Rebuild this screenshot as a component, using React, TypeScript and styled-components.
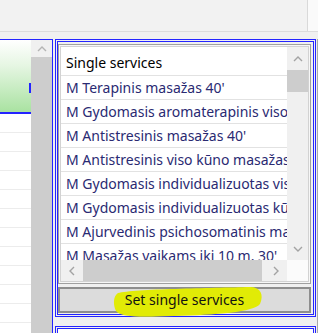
import React from "react"
import styled, { createGlobalStyle } from "styled-components"

const BLUE = "#2424ff"

const GlobalStyle = createGlobalStyle`
  html, body {
    margin: 0;
    padding: 0;
    background: #f0f0f0;
  }
  body {
    font-family: "Noto Sans", "Open Sans", sans-serif;
    font-size: 14px;
  }
`

const Screen = styled.div`
  width: 318px;
  height: 333px;
  overflow: hidden;
  display: flex;
  flex-direction: column;
  background: #f0f0f0;
`

const TopBar = styled.div`
  height: 31px;
  flex: none;
  display: flex;
  justify-content: flex-end;
  background: #f2f2f2;
  border-bottom: 1px solid #dcdcdc;
`

const TopStrip = styled.div`
  width: 10px;
  border-left: 1px solid #d9d9d9;
  background: #fafafa;
`

const Main = styled.div`
  flex: 1;
  display: flex;
  padding-top: 7px;
  min-height: 0;
`

const LeftPanel = styled.div`
  width: 52px;
  flex: none;
  display: flex;
  border-top: 1px solid ${BLUE};
  border-right: 1px solid ${BLUE};
`

const LeftContent = styled.div`
  width: 31px;
  background: #fff;
  display: flex;
  flex-direction: column;
`

const GreenArea = styled.div`
  position: relative;
  height: 72px;
  flex: none;
  background: linear-gradient(#ffffff, #e6f6e3 35%, #a9e2a1);
  border-bottom: 2px solid ${BLUE};
`

const Tick = styled.div`
  position: absolute;
  right: 0;
  top: 43px;
  width: 2px;
  height: 10px;
  background: ${BLUE};
`

const LeftRow = styled.div`
  height: 18px;
  flex: none;
  border-bottom: 1px solid #ececec;
`

const LeftScroll = styled.div`
  width: 21px;
  display: flex;
  flex-direction: column;
  background: #cdcdcd;
`

const ArrowBox = styled.div<{ $h: number; $w?: number; $bg?: string }>`
  height: ${(p) => p.$h}px;
  width: ${(p) => (p.$w ? `${p.$w}px` : "auto")};
  flex: none;
  display: flex;
  align-items: center;
  justify-content: center;
  background: ${(p) => p.$bg || "#f0f0f0"};
`

const RightColumn = styled.div`
  width: 261px;
  flex: none;
  margin-left: 2px;
  display: flex;
  flex-direction: column;
  gap: 9px;
`

const Outer = styled.div<{ $h?: number }>`
  height: ${(p) => (p.$h ? `${p.$h}px` : "auto")};
  flex: none;
  box-sizing: border-box;
  border: 1px solid ${BLUE};
  padding: 1px;
  display: flex;
  background: #f0f0f0;
`

const Inner = styled.div<{ $white?: boolean }>`
  flex: 1;
  border: 1px solid ${BLUE};
  display: flex;
  flex-direction: column;
  padding: 2px 2px 1px 0;
  gap: 3px;
  background: ${(p) => (p.$white ? "#fff" : "#f0f0f0")};
`

const Frame = styled.div`
  height: 240px;
  flex: none;
  box-sizing: border-box;
  border: 1px solid #a0a0a0;
  padding: 1px;
  background: #f7f7f7;
  display: flex;
`

const ListBox = styled.div`
  flex: 1;
  border: 1px solid #d2d2d2;
  background: #fff;
  display: grid;
  grid-template-columns: 1fr 21px;
  grid-template-rows: 1fr 21px;
  min-width: 0;
`

const Items = styled.div`
  overflow: hidden;
  min-width: 0;
`

const Header = styled.div`
  height: 29px;
  box-sizing: border-box;
  padding: 3px 0 0 5px;
  display: flex;
  align-items: center;
  color: #000;
  border-bottom: 1px solid #e2e2e2;
  white-space: nowrap;
`

const Item = styled.div`
  height: 24px;
  box-sizing: border-box;
  padding-left: 5px;
  display: flex;
  align-items: center;
  color: #2a2a72;
  border-bottom: 1px solid #e2e2e2;
  white-space: nowrap;
`

const VScroll = styled.div`
  display: flex;
  flex-direction: column;
  background: #f0f0f0;
`

const Thumb = styled.div<{ $size: number }>`
  flex: none;
  height: ${(p) => p.$size}px;
  background: #cdcdcd;
`

const HThumb = styled.div<{ $size: number }>`
  flex: none;
  width: ${(p) => p.$size}px;
  background: #cdcdcd;
`

const Track = styled.div`
  flex: 1;
`

const HScroll = styled.div`
  display: flex;
  background: #f0f0f0;
`

const Corner = styled.div`
  background: #fbfbfb;
`

const Button = styled.div`
  position: relative;
  height: 26px;
  flex: none;
  box-sizing: border-box;
  border: 2px solid #8e8e8e;
  background: #dcdcdc;
  display: flex;
  align-items: center;
  justify-content: center;
  color: #111;
`

const Marker = styled.svg`
  position: absolute;
  left: 52px;
  top: -4px;
`

const Label = styled.span`
  position: relative;
  padding-bottom: 1px;
`

const RightEdge = styled.div`
  width: 1px;
  margin-left: 1px;
  flex: none;
  background: #a8a8a8;
`

const Chevron = ({ dir, color = "#a3a3a3" }: { dir: "up" | "down" | "left" | "right"; color?: string }) => {
  const pts = {
    up: "1,6 5,2 9,6",
    down: "1,2 5,6 9,2",
    left: "6,1 2,5 6,9",
    right: "2,1 6,5 2,9",
  }[dir]
  const vertical = dir === "up" || dir === "down"
  return (
    <svg width={vertical ? 10 : 8} height={vertical ? 8 : 10}>
      <polyline points={pts} fill="none" stroke={color} strokeWidth="1.4" />
    </svg>
  )
}

const services = [
  "M Terapinis masažas 40'",
  "M Gydomasis aromaterapinis viso kūno masažas",
  "M Antistresinis masažas 40'",
  "M Antistresinis viso kūno masažas 60'",
  "M Gydomasis individualizuotas viso kūno masažas",
  "M Gydomasis individualizuotas kūno dalies masažas",
  "M Ajurvedinis psichosomatinis masažas",
  "M Masažas vaikams iki 10 m. 30'",
]

export default function App() {
  return (
    <Screen>
      <GlobalStyle />
      <TopBar>
        <TopStrip />
      </TopBar>
      <Main>
        <LeftPanel>
          <LeftContent>
            <GreenArea>
              <Tick />
            </GreenArea>
            {Array.from({ length: 12 }).map((_, i) => (
              <LeftRow key={i} />
            ))}
          </LeftContent>
          <LeftScroll>
            <ArrowBox $h={17}>
              <Chevron dir="up" color="#b4b4b4" />
            </ArrowBox>
          </LeftScroll>
        </LeftPanel>
        <RightColumn>
          <Outer $h={278}>
            <Inner>
              <Frame>
                <ListBox>
                  <Items>
                    <Header>Single services</Header>
                    {services.map((s) => (
                      <Item key={s}>{s}</Item>
                    ))}
                  </Items>
                  <VScroll>
                    <ArrowBox $h={23}>
                      <Chevron dir="up" />
                    </ArrowBox>
                    <Thumb $size={22} />
                    <Track />
                    <ArrowBox $h={22}>
                      <Chevron dir="down" />
                    </ArrowBox>
                  </VScroll>
                  <HScroll>
                    <ArrowBox $h={21} $w={22}>
                      <Chevron dir="left" />
                    </ArrowBox>
                    <HThumb $size={179} />
                    <Track />
                    <ArrowBox $h={21} $w={22}>
                      <Chevron dir="right" />
                    </ArrowBox>
                  </HScroll>
                  <Corner />
                </ListBox>
              </Frame>
              <Button>
                <Marker width="152" height="34" viewBox="0 0 152 34">
                  <path
                    d="M6 8 C22 4 100 3 138 2 C149 2 152 10 148 19 C142 27 104 30 62 31 C32 32 9 33 4 26 C1 20 1 11 6 8 Z"
                    fill="#e1eb06"
                  />
                </Marker>
                <Label>Set single services</Label>
              </Button>
            </Inner>
          </Outer>
          <Outer $h={40}>
            <Inner $white />
          </Outer>
        </RightColumn>
        <RightEdge />
      </Main>
    </Screen>
  )
}
